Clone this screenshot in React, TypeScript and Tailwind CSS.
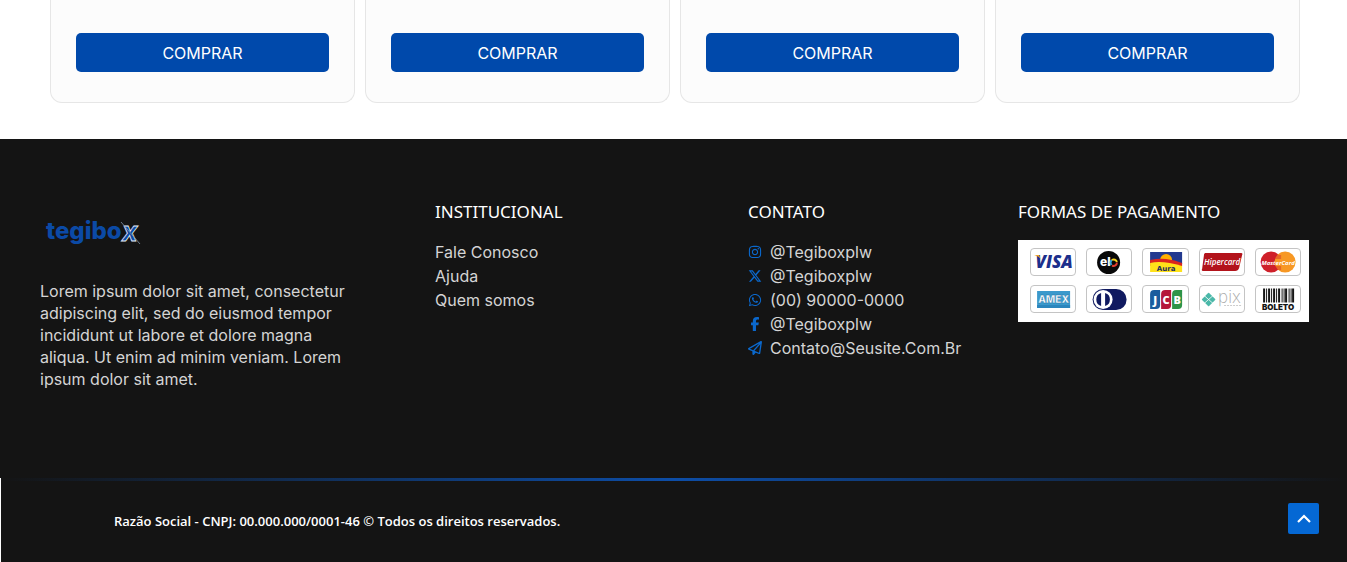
import type { ReactNode } from 'react'
import { FaFacebookF, FaInstagram, FaRegPaperPlane, FaWhatsapp, FaXTwitter } from 'react-icons/fa6'

const PRODUCTS = [1, 2, 3, 4]

const LINKS = ['Fale Conosco', 'Ajuda', 'Quem somos']

const CONTACTS = [
  { icon: FaInstagram, label: '@Tegiboxplw' },
  { icon: FaXTwitter, label: '@Tegiboxplw' },
  { icon: FaWhatsapp, label: '(00) 90000-0000' },
  { icon: FaFacebookF, label: '@Tegiboxplw' },
  { icon: FaRegPaperPlane, label: 'Contato@Seusite.Com.Br' },
]

// every badge is drawn on a 44x26 board
const PAYMENTS: { name: string; art: ReactNode }[] = [
  {
    name: 'Visa',
    art: (
      <>
        <text x="23" y="19" textAnchor="middle" fontFamily="Open Sans, sans-serif" fontSize="17" fontWeight="800" fontStyle="italic" fill="#1c2f8c">VISA</text>
        <path d="M3 6h5l2 5c-1-3-4-4-7-5z" fill="#eea320" />
      </>
    ),
  },
  {
    name: 'Elo',
    art: (
      <>
        <circle cx="21.5" cy="13.5" r="11.5" fill="#080808" />
        <text x="13" y="17" fontSize="12" fontWeight="800" fill="#fff">el</text>
        <g fill="none" strokeWidth="2">
          <path d="M24.4 16A3.3 3.3 0 0 1 24.8 11" stroke="#35a5dd" />
          <path d="M24.8 11a3.3 3.3 0 0 1 5 2" stroke="#f5d21b" />
          <path d="M29.8 13.5a3.3 3.3 0 0 1-4.8 3" stroke="#e23c2e" />
        </g>
      </>
    ),
  },
  {
    name: 'Aura',
    art: (
      <>
        <path d="M7 3h32v12H7z" fill="#23398f" />
        <path d="M17 11a6 6 0 0 1 12 0z" fill="#ffb000" />
        <path d="M7 11q9-2 16-1 9 1 16 4v3H7z" fill="#da251d" />
        <path d="M7 14q12-3 32 3v6H7z" fill="#ffe21a" />
        <text x="23" y="21.5" textAnchor="middle" fontFamily="DejaVu Sans, sans-serif" fontSize="7" fontWeight="700" fill="#1c2f5c">Aura</text>
      </>
    ),
  },
  {
    name: 'Hipercard',
    art: (
      <>
        <path d="M5 4h36q2 0 1 2l-3 13q-1 3-4 3H3q-2 0-1-2L4 5z" fill="#b3131b" />
        <text x="22" y="15.5" textAnchor="middle" fontFamily="Open Sans, sans-serif" fontSize="8" fontWeight="600" fontStyle="italic" fill="#fff">Hipercard</text>
      </>
    ),
  },
  {
    name: 'MasterCard',
    art: (
      <>
        <circle cx="15" cy="13" r="10.5" fill="#cf202a" />
        <circle cx="29" cy="13" r="10.5" fill="#f79824" />
        <path d="M19 7h6M18 9h7M18 18h7M19 20h6" stroke="#cf202a" strokeWidth=".8" />
        <text x="22" y="15.5" textAnchor="middle" fontFamily="Open Sans, sans-serif" fontSize="6" fontWeight="700" fontStyle="italic" fill="#fff">MasterCard</text>
      </>
    ),
  },
  {
    name: 'American Express',
    art: (
      <>
        <path d="M6 5h33v17H6z" fill="#3b99cc" />
        <path d="M6 19h33v3H6z" fill="#2c86bd" />
        <text x="22.5" y="17" textAnchor="middle" fontSize="10" fontWeight="800" fill="#fff" stroke="#1f6f9f" strokeWidth=".3">AMEX</text>
      </>
    ),
  },
  {
    name: 'Diners Club',
    art: (
      <>
        <path d="M17 3h12a10 10 0 0 1 0 21H17z" fill="#101a60" />
        <circle cx="16" cy="13.5" r="10.5" fill="#101a60" />
        <circle cx="16" cy="13.5" r="9.5" fill="#fff" />
        <path d="M14 7a6.8 6.8 0 0 0 0 13zM18 7a6.8 6.8 0 0 1 0 13z" fill="#101a60" />
      </>
    ),
  },
  {
    name: 'JCB',
    art: (
      <>
        <path d="M11 4h6v15q0 4-4 4H7V8q0-4 4-4z" fill="#1b5c9e" />
        <path d="M22 4h6v15q0 4-4 4h-6V8q0-4 4-4z" fill="#b5173a" />
        <path d="M33 4h6v15q0 4-4 4h-6V8q0-4 4-4z" fill="#2e9448" />
        <g textAnchor="middle" fontFamily="Open Sans, sans-serif" fontSize="11" fontWeight="800" fill="#fff">
          <text x="12" y="17.5">J</text>
          <text x="23" y="17.5">C</text>
          <text x="34" y="17.5">B</text>
        </g>
      </>
    ),
  },
  {
    name: 'Pix',
    art: (
      <>
        <path d="M8.5 7.5 14.5 13.5 8.5 19.5 2.5 13.5z" fill="#4bb8a9" stroke="#4bb8a9" strokeWidth="1.5" strokeLinejoin="round" />
        <path d="m4 9.5 9 8M13 9.5l-9 8" stroke="#fff" strokeWidth=".8" />
        <text x="18" y="17" fontSize="17" fontWeight="200" fill="#a8a8a8">pix</text>
        <path d="M24 19.5h17" stroke="#ccc" strokeDasharray="2 1" />
      </>
    ),
  },
  {
    name: 'Boleto',
    art: (
      <>
        <path d="M8 2.500v14M13 2.500v14M18 2.500v14M23 2.500v14M30 2.500v14M37 2.500v14" stroke="#151515" strokeWidth="2" />
        <path d="M10.500 2.500v14M15.500 2.500v14M20.500 2.500v14M26 2.500v14M28 2.500v14M33 2.500v14M35 2.500v14" stroke="#151515" strokeWidth="1" />
        <text x="22" y="24" textAnchor="middle" fontSize="8" fontWeight="900" fill="#151515">BOLETO</text>
      </>
    ),
  },
]

function Logo() {
  return (
    <svg viewBox="0 0 110 40" className="h-10 w-[110px]" role="img" aria-label="tegibox" fontFamily="Inter, sans-serif">
      <text x="6" y="27" fontSize="24" fontWeight="800" fill="#0b4aa6">tegibo</text>
      <text x="82" y="29" fontSize="27" fontWeight="700" fontStyle="italic" fill="#0b4aa6" stroke="#e5edf7" strokeWidth=".8">x</text>
      <path d="m81 10 19 22" stroke="#8494a8" strokeWidth=".8" />
    </svg>
  )
}

function FooterTitle({ children }: { children: ReactNode }) {
  return <h2 className="mb-4 font-['Noto_Sans',sans-serif] text-[17px] leading-6 text-white">{children}</h2>
}

export default function App() {
  return (
    <div className="bg-white font-[Inter,sans-serif]">
      <main className="grid grid-cols-4 gap-[10px] pr-[47px] pb-9 pl-[50px]">
        {PRODUCTS.map((id) => (
          <div key={id} className="rounded-b-xl border border-t-0 border-[#e6e6e6] bg-[#fcfcfc] px-[25px] pt-[33px] pb-[30px]">
            <button type="button" className="block h-[39px] w-full rounded-[5px] bg-[#0049ab] text-base text-white">COMPRAR</button>
          </div>
        ))}
      </main>

      <footer className="bg-[#141414] text-[#d4d4d4]">
        <div className="grid grid-cols-[395fr_313fr_270fr_291fr] pt-[61px] pr-[38px] pb-[88px] pl-10 text-base">
          <div className="pt-3">
            <a href="#inicio" className="block w-fit"><Logo /></a>
            <p className="mt-7 max-w-80 leading-[22px]">
              Lorem ipsum dolor sit amet, consectetur adipiscing elit, sed do eiusmod tempor incididunt ut labore et dolore magna aliqua. Ut enim ad minim veniam. Lorem ipsum dolor sit amet.
            </p>
          </div>

          <div>
            <FooterTitle>INSTITUCIONAL</FooterTitle>
            <ul>
              {LINKS.map((link) => (
                <li key={link} className="leading-6"><a href="#institucional">{link}</a></li>
              ))}
            </ul>
          </div>

          <div>
            <FooterTitle>CONTATO</FooterTitle>
            <ul>
              {CONTACTS.map(({ icon: Icon, label }, i) => (
                <li key={i}>
                  <a href="#contato" className="flex items-center gap-2 leading-6">
                    <Icon className="size-[14px] shrink-0 text-[#0b68cc]" />
                    {label}
                  </a>
                </li>
              ))}
            </ul>
          </div>

          <div>
            <FooterTitle>FORMAS DE PAGAMENTO</FooterTitle>
            <div className="grid grid-cols-5 gap-x-[10px] gap-y-[9px] bg-white pt-2 pr-2 pb-[9px] pl-3">
              {PAYMENTS.map((p) => (
                <div key={p.name} className="h-7 rounded-[4px] border border-[#c4c4c4]">
                  <svg viewBox="0 0 44 26" className="h-full w-full" role="img" aria-label={p.name}>{p.art}</svg>
                </div>
              ))}
            </div>
          </div>
        </div>

        {/* Copyright bar */}
        <div className="border-l border-white">
          <div className="h-[3px] bg-linear-to-r from-transparent via-[#0d4da6] to-transparent" />
          <p className="px-[113px] py-[30px] font-['Open_Sans',sans-serif] text-[13px] leading-[21px] font-semibold text-white">
            Razão Social - CNPJ: 00.000.000/0001-46 © Todos os direitos reservados.
          </p>
        </div>
      </footer>

      <a href="#inicio" aria-label="Voltar ao topo" className="fixed right-7 bottom-7 flex size-[31px] items-center justify-center rounded-[2px] bg-[#0568d4]">
        <svg viewBox="0 0 16 16" className="size-4" fill="none" stroke="#fff" strokeWidth="2.2">
          <path d="m2 11 6-6 6 6" />
        </svg>
      </a>
    </div>
  )
}
